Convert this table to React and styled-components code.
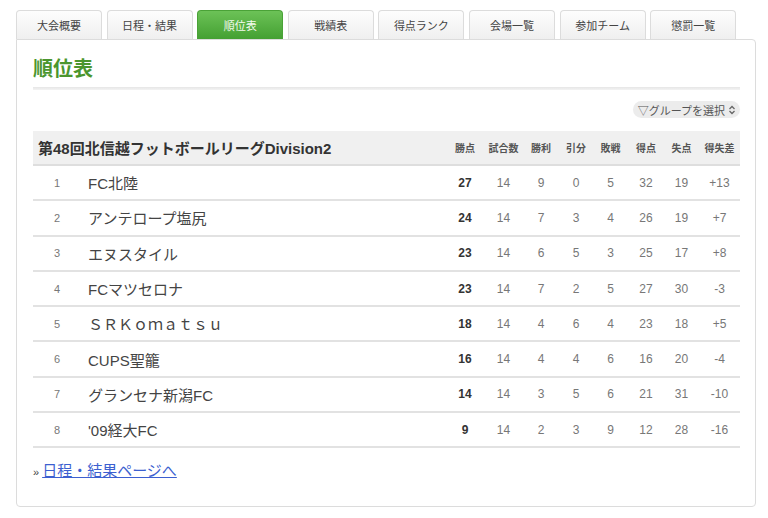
import React from 'react';
import styled, { createGlobalStyle } from 'styled-components';

const GlobalStyle = createGlobalStyle`
  html, body {
    margin: 0;
    background: #fff;
    font-family: 'Liberation Sans', 'Noto Sans CJK JP', sans-serif;
    color: #444;
  }
`;

const Page = styled.div`
  padding: 10px 0 0 16px;
  width: 740px;
`;

const Tabs = styled.ul`
  display: flex;
  gap: 4.6px;
  margin: 0;
  padding: 0;
  list-style: none;
`;

const Tab = styled.li`
  width: 86px;
  height: 29px;
  box-sizing: border-box;
  display: flex;
  align-items: center;
  justify-content: center;
  font-size: 11px;
  border: 1px solid ${(p) => (p.$active ? '#4aa237' : '#dcdcdc')};
  border-bottom: none;
  border-radius: 4px 4px 0 0;
  color: ${(p) => (p.$active ? '#f4fbef' : '#444')};
  background: ${(p) =>
    p.$active
      ? 'linear-gradient(#6cc257, #44a032)'
      : 'linear-gradient(#fdfdfd, #efefef)'};
`;

const Panel = styled.section`
  border: 1px solid #dcdcdc;
  border-radius: 0 4px 4px 4px;
  padding: 15px 15px 25px 16px;
  height: 468px;
  box-sizing: border-box;
`;

const Title = styled.h2`
  margin: 0;
  font-size: 20px;
  line-height: 28px;
  font-weight: 700;
  color: #4b962e;
`;

const Rule = styled.div`
  margin-top: 4px;
  height: 3px;
  background: linear-gradient(#e6e6e6, #f3f3f3);
`;

const SelectRow = styled.div`
  display: flex;
  justify-content: flex-end;
  margin-top: 11px;
`;

const Select = styled.div`
  display: flex;
  align-items: center;
  gap: 3px;
  height: 17px;
  padding: 0 4px 0 5px;
  border-radius: 9px;
  background: #ececec;
  font-size: 11px;
  color: #555;
`;

const Table = styled.table`
  width: 100%;
  margin-top: 13px;
  border-collapse: collapse;
  table-layout: fixed;
`;

const Col = styled.col`
  width: ${(p) => (p.$w ? `${p.$w}px` : 'auto')};
`;

const HeadRow = styled.tr`
  height: 34px;
  background: #f0f0f0;
  border-bottom: 2px solid #dedede;
`;

const Caption = styled.th`
  text-align: left;
  padding-left: 5px;
  font-size: 15px;
  font-weight: 700;
  color: #333;
`;

const HeadCell = styled.th`
  text-align: center;
  font-size: 10px;
  font-weight: 700;
  color: #555;
`;

const Row = styled.tr`
  height: 35.3px;
  border-bottom: 2px solid #e2e2e2;
`;

const Rank = styled.td`
  text-align: center;
  font-size: 11px;
  color: #777;
`;

const Name = styled.td`
  font-size: 15px;
  color: #444;
  padding-left: 7px;
`;

const Num = styled.td`
  text-align: center;
  font-size: 12px;
  color: ${(p) => (p.$bold ? '#333' : '#777')};
  font-weight: ${(p) => (p.$bold ? 700 : 400)};
`;

const More = styled.p`
  margin: 13px 0 0;
  font-size: 15px;
  line-height: 20px;
  color: #444;

  span {
    font-size: 11px;
    margin-right: 3px;
  }

  a {
    color: #3c5fd0;
    text-decoration: underline;
  }
`;

const tabs = ['大会概要', '日程・結果', '順位表', '戦績表', '得点ランク', '会場一覧', '参加チーム', '懲罰一覧'];

const cols = [
  ['勝点', 38],
  ['試合数', 39],
  ['勝利', 36],
  ['引分', 34],
  ['敗戦', 35],
  ['得点', 36],
  ['失点', 35],
  ['得失差', 41],
];

const teams = [
  ['FC北陸', 27, 14, 9, 0, 5, 32, 19, '+13'],
  ['アンテロープ塩尻', 24, 14, 7, 3, 4, 26, 19, '+7'],
  ['エヌスタイル', 23, 14, 6, 5, 3, 25, 17, '+8'],
  ['FCマツセロナ', 23, 14, 7, 2, 5, 27, 30, '-3'],
  ['ＳＲＫｏｍａｔｓｕ', 18, 14, 4, 6, 4, 23, 18, '+5'],
  ['CUPS聖籠', 16, 14, 4, 4, 6, 16, 20, '-4'],
  ['グランセナ新潟FC', 14, 14, 3, 5, 6, 21, 31, '-10'],
  ["'09経大FC", 9, 14, 2, 3, 9, 12, 28, '-16'],
];

const App = () => (
  <Page>
    <GlobalStyle />
    <Tabs>
      {tabs.map((t) => (
        <Tab key={t} $active={t === '順位表'}>
          {t}
        </Tab>
      ))}
    </Tabs>
    <Panel>
      <Title>順位表</Title>
      <Rule />
      <SelectRow>
        <Select>
          ▽グループを選択
          <svg width="8" height="10" viewBox="0 0 8 10" fill="none" stroke="#666" strokeWidth="1.3">
            <path d="M1.5 4 L4 1.5 L6.5 4" />
            <path d="M1.5 6 L4 8.5 L6.5 6" />
          </svg>
        </Select>
      </SelectRow>
      <Table>
        <colgroup>
          <Col $w={48} />
          <Col />
          {cols.map(([c, w]) => (
            <Col key={c} $w={w} />
          ))}
        </colgroup>
        <thead>
          <HeadRow>
            <Caption colSpan={2}>第48回北信越フットボールリーグDivision2</Caption>
            {cols.map(([c]) => (
              <HeadCell key={c}>{c}</HeadCell>
            ))}
          </HeadRow>
        </thead>
        <tbody>
          {teams.map(([name, ...stats], i) => (
            <Row key={name}>
              <Rank>{i + 1}</Rank>
              <Name>{name}</Name>
              {stats.map((s, j) => (
                <Num key={j} $bold={j === 0}>
                  {s}
                </Num>
              ))}
            </Row>
          ))}
        </tbody>
      </Table>
      <More>
        <span>»</span>
        <a href="#schedule">日程・結果ページへ</a>
      </More>
    </Panel>
  </Page>
);

export default App;
